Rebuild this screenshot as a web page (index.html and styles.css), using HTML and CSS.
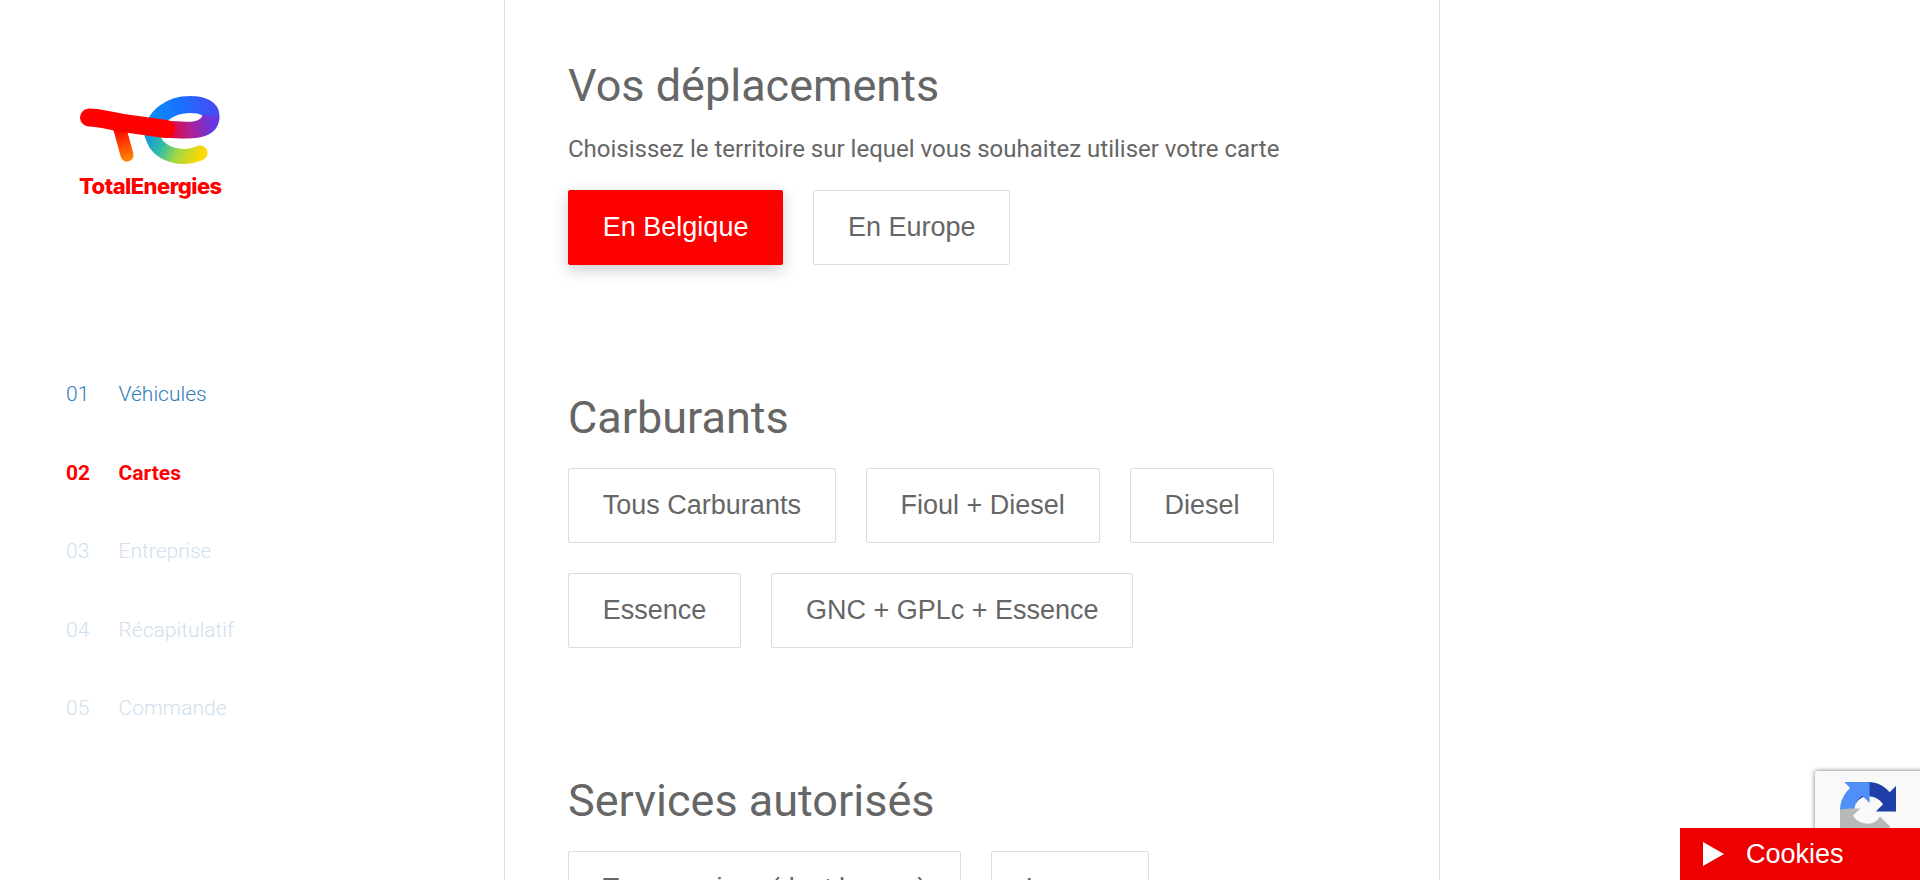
FILE: index.html
```html
<!DOCTYPE html>
<html lang="fr">
<head>
<meta charset="utf-8">
<title>Cartes</title>
<link rel="stylesheet" href="styles.css">
</head>
<body>
<div class="page">
  <aside class="sidebar">
    <div class="logo">
      <svg class="logo-mark" viewBox="0 0 144 72" width="144" height="72" aria-hidden="true">
        <defs>
          <linearGradient id="gBlue" gradientUnits="userSpaceOnUse" x1="66" y1="30" x2="140" y2="20">
            <stop offset="0" stop-color="#0a90f5"/><stop offset=".5" stop-color="#1a70ff"/><stop offset="1" stop-color="#4a48f0"/>
          </linearGradient>
          <linearGradient id="gRain" gradientUnits="userSpaceOnUse" x1="72" y1="38" x2="122" y2="62">
            <stop offset="0" stop-color="#1a9ad8"/><stop offset=".3" stop-color="#35c0a0"/><stop offset=".6" stop-color="#a8d840"/><stop offset="1" stop-color="#ffd800"/>
          </linearGradient>
          <linearGradient id="gCross" gradientUnits="userSpaceOnUse" x1="86" y1="38" x2="132" y2="30">
            <stop offset="0" stop-color="#f5002a"/><stop offset=".5" stop-color="#b02090"/><stop offset="1" stop-color="#6a35e0"/>
          </linearGradient>
          <linearGradient id="gStem" gradientUnits="userSpaceOnUse" x1="40" y1="35" x2="47" y2="66">
            <stop offset="0" stop-color="#ff0000"/><stop offset="1" stop-color="#ff8000"/>
          </linearGradient>
        </defs>
        <path class="arc" d="M73 42C73 22 92 11.5 110 11.5C124 11.5 131 16 131 23C131 29 128 33 122 35" stroke="url(#gBlue)"/>
        <path class="arc arc-low" d="M73 42C74 56 90 63.5 104 63.5C110 63.5 115 62 120 60" stroke="url(#gRain)"/>
        <path class="arc arc-butt" d="M84 36C96 37 108 38 116 36.5C124 35 130 30 131 23" stroke="url(#gCross)"/>
        <path class="arc arc-stem" d="M35 30C39 32 40 36 41 40L47 62" stroke="url(#gStem)"/>
        <path class="arc arc-bar" d="M9 24.5C20 24.5 35 29 50 31L86 36" stroke="#ff0000"/>
      </svg>
      <span class="logo-text">TotalEnergies</span>
    </div>
    <nav class="steps">
      <div class="step step-done"><span class="step-num">01</span><span>Véhicules</span></div>
      <div class="step step-current"><span class="step-num">02</span><span>Cartes</span></div>
      <div class="step step-todo"><span class="step-num">03</span><span>Entreprise</span></div>
      <div class="step step-todo"><span class="step-num">04</span><span>Récapitulatif</span></div>
      <div class="step step-todo"><span class="step-num">05</span><span>Commande</span></div>
    </nav>
  </aside>
  <main class="content">
    <section class="group">
      <h2 class="title">Vos déplacements</h2>
      <p class="lead">Choisissez le territoire sur lequel vous souhaitez utiliser votre carte</p>
      <div class="options">
        <button class="option option-on">En Belgique</button>
        <button class="option">En Europe</button>
      </div>
    </section>
    <section class="group">
      <h2 class="title">Carburants</h2>
      <div class="options">
        <button class="option">Tous Carburants</button>
        <button class="option">Fioul + Diesel</button>
        <button class="option">Diesel</button>
        <button class="option">Essence</button>
        <button class="option">GNC + GPLc + Essence</button>
      </div>
    </section>
    <section class="group">
      <h2 class="title">Services autorisés</h2>
      <div class="options">
        <button class="option option-tight">Tous services (dont lavage)</button>
        <button class="option">Lavage</button>
      </div>
    </section>
  </main>
</div>
<div class="recaptcha">
  <svg viewBox="0 0 64 64" width="56" height="56" aria-hidden="true">
    <path d="M64 31.955l-.033-1.37V4.687l-7.16 7.16C50.948 4.674 42.033.093 32.05.093c-10.4 0-19.622 4.96-25.458 12.64l11.736 11.86c1.15-2.127 2.784-3.953 4.76-5.33 2.05-1.6 4.952-2.906 9.962-2.906.605 0 1.072.07 1.416.203 6.21.49 11.592 3.917 14.76 8.89l-8.306 8.31c10.52-.04 22.4-.06 23.082.195" fill="#1f3fa8"/>
    <path d="M31.954 0l-1.37.033H4.687l7.16 7.16C4.674 13.05.093 21.967.093 31.95c0 .68.02 1.36.06 2.03l16.42-.1c0-.6-.07-1.3-.07-1.93 0-.605.07-1.072.203-1.416.49-6.21 3.917-11.592 8.89-14.76l8.31 8.306c-.04-10.52-.06-22.4-.195-23.082" fill="#4f8ff7"/>
    <path d="M0 31.95l.033 1.37v25.898l7.16-7.16C13.05 59.33 21.967 63.91 31.95 63.91c10.4 0 19.622-4.96 25.458-12.64L45.672 39.41c-1.15 2.127-2.784 3.953-4.76 5.33-2.05 1.6-4.952 2.906-9.962 2.906-.605 0-1.072-.07-1.416-.203-6.21-.49-11.592-3.917-14.76-8.89l8.306-8.31C12.56 30.283.68 30.3 0 31.95" fill="#b8b8b8"/>
  </svg>
</div>
<div class="cookies"><span class="cookies-arrow"></span><span>Cookies</span></div>
</body>
</html>
```
FILE: styles.css
```css
* { box-sizing: border-box; }
html, body { margin: 0; height: 880px; overflow: hidden; background: #fff; }
body { font-family: Roboto, "Liberation Sans", sans-serif; color: #666; }
.page { display: flex; height: 880px; overflow: hidden; }

.sidebar { width: 504px; flex: none; padding: 93px 0 0 66px; }
.logo { display: flex; flex-direction: column; align-items: flex-start; }
.logo-mark { display: block; margin-left: 14px; }
.logo-text { font-family: Inter, sans-serif; font-weight: 800; font-size: 22px; line-height: 26px; letter-spacing: -.55px; color: #f00; margin: 8px 0 0 13px; }
.arc { fill: none; stroke-width: 17; stroke-linecap: round; }
.arc-butt { stroke-linecap: butt; }
.arc-bar { stroke-width: 18; }
.arc-stem { stroke-width: 13; }
.arc-low { stroke-width: 15; }

.steps { display: flex; flex-direction: column; margin-top: 156px; }
.step { display: flex; height: 78.5px; align-items: center; font-size: 21px; font-weight: 300; }
.step-num { width: 52.5px; }
.step-done { color: #2f7db8; }
.step-current { color: #f00; font-weight: 700; }
.step-todo { color: #cfe0ee; }

.content { width: 936px; flex: none; padding: 60px 0 0 63px; border-left: 1px solid #ddd; border-right: 1px solid #ddd; }
.group { margin-bottom: 127px; }
.title { margin: 0 0 24px; font-size: 45px; line-height: 52px; font-weight: 400; color: #666; }
.lead { margin: -2px 0 26px; font-size: 24px; line-height: 30px; color: #666; }
.options { display: flex; flex-wrap: wrap; gap: 30px; max-width: 810px; }
.option { height: 75px; padding: 0 33.8px; background: #fff; border: 1px solid #ddd; border-radius: 2px; font-family: "Liberation Sans", Arial, sans-serif; font-size: 27px; color: #666; }
.option-on { background: #f00; border-color: #f00; color: #fff; box-shadow: 0 5px 16px rgba(0,0,0,.2); }
.option-tight { letter-spacing: -.2px; }

.recaptcha { position: fixed; left: 1815px; top: 771px; width: 256px; height: 120px; padding: 11px 0 0 25px; background: #f9f9f9; box-shadow: 0 0 5px rgba(0,0,0,.55); border-radius: 2px; }
.cookies { position: fixed; right: 0; bottom: 0; width: 240px; height: 52px; display: flex; align-items: center; padding-left: 23px; gap: 22px; background: #e00; color: #fff; font-family: "Liberation Sans", Arial, sans-serif; font-size: 27px; }
.cookies-arrow { width: 0; height: 0; border-left: 21px solid #fff; border-top: 12px solid transparent; border-bottom: 12px solid transparent; }
```
